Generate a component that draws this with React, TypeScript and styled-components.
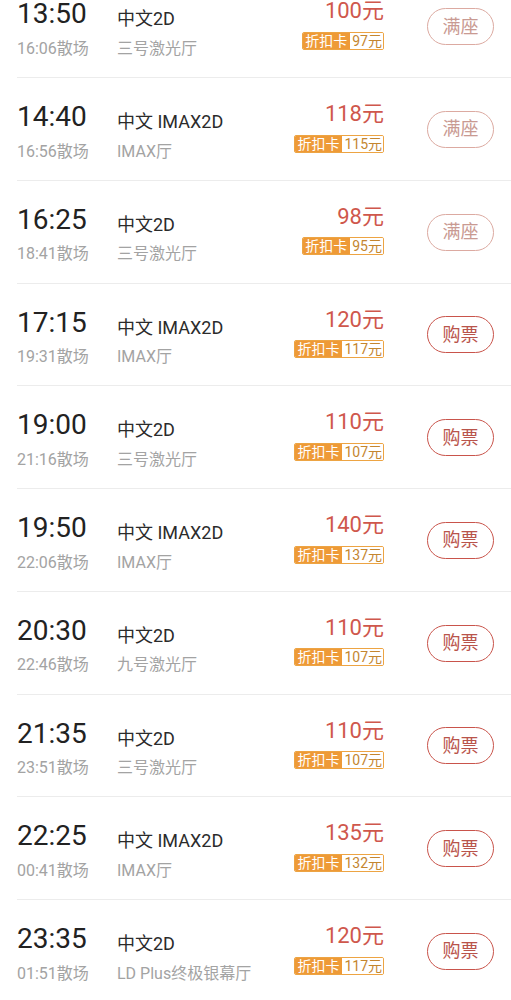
import React from 'react';
import styled, { createGlobalStyle } from 'styled-components';

const GlobalStyle = createGlobalStyle`
    html, body {
        margin: 0;
        padding: 0;
        background: #ffffff;
        overflow: hidden;
    }
    body {
        font-family: Roboto, 'Noto Sans CJK SC', sans-serif;
        -webkit-font-smoothing: antialiased;
    }
`;

const List = styled.div`
    margin-top: -24.75px;
    padding-left: 17px;
`;

const Row = styled.div`
    display: flex;
    align-items: flex-start;
    height: 102.75px;
    box-sizing: border-box;
    padding-right: 17px;
    border-bottom: 1px solid #ececec;
`;

const TimeCol = styled.div`
    width: 100px;
    flex-shrink: 0;
    padding-top: 22px;
`;

const Start = styled.div`
    font-size: 28px;
    line-height: 34px;
    color: #222222;
`;

const Sub = styled.div`
    font-size: 16px;
    line-height: 20px;
    color: #a3a3a3;
    white-space: nowrap;
`;

const EndTime = styled(Sub)`
    margin-top: 7.5px;
`;

const InfoCol = styled.div`
    flex: 1;
    padding-top: 32px;
    min-width: 0;
`;

const Format = styled.div`
    font-size: 18px;
    line-height: 24px;
    color: #2b2b2b;
    white-space: nowrap;
`;

const Hall = styled(Sub)`
    margin-top: 7.5px;
`;

const PriceCol = styled.div`
    display: flex;
    flex-direction: column;
    align-items: flex-end;
    padding-top: 22px;
    margin-right: 43px;
`;

const Price = styled.div`
    font-size: 22px;
    line-height: 28px;
    color: #cf574c;
`;

const Card = styled.div`
    display: flex;
    margin-top: 6.5px;
    height: 18px;
    box-sizing: border-box;
    border: 1px solid #eda443;
    border-radius: 2px;
    overflow: hidden;
    font-size: 14px;
    line-height: 16px;
`;

const CardLabel = styled.span`
    background: #ee9a37;
    color: #ffffff;
    padding: 0 3px 0 2px;
`;

const CardPrice = styled.span`
    background: #ffffff;
    color: #c4862f;
    padding: 0 1px 0 2px;
`;

const BuyButton = styled.button<{ $full?: boolean }>`
    align-self: center;
    width: 67px;
    height: 37px;
    margin-top: 1px;
    padding: 0;
    box-sizing: border-box;
    border-radius: 19px;
    background: #ffffff;
    border: 1.5px solid ${(p) => (p.$full ? '#dcaaa1' : '#c9544b')};
    color: ${(p) => (p.$full ? '#c99a92' : '#b9544b')};
    font-family: Roboto, 'Noto Sans CJK SC', sans-serif;
    font-size: 18px;
    line-height: 20px;
`;

type Show = {
    start: string;
    end: string;
    format: string;
    hall: string;
    price: number;
    card: number;
    full?: boolean;
};

const shows: Show[] = [
    { start: '13:50', end: '16:06', format: '中文2D', hall: '三号激光厅', price: 100, card: 97, full: true },
    { start: '14:40', end: '16:56', format: '中文 IMAX2D', hall: 'IMAX厅', price: 118, card: 115, full: true },
    { start: '16:25', end: '18:41', format: '中文2D', hall: '三号激光厅', price: 98, card: 95, full: true },
    { start: '17:15', end: '19:31', format: '中文 IMAX2D', hall: 'IMAX厅', price: 120, card: 117 },
    { start: '19:00', end: '21:16', format: '中文2D', hall: '三号激光厅', price: 110, card: 107 },
    { start: '19:50', end: '22:06', format: '中文 IMAX2D', hall: 'IMAX厅', price: 140, card: 137 },
    { start: '20:30', end: '22:46', format: '中文2D', hall: '九号激光厅', price: 110, card: 107 },
    { start: '21:35', end: '23:51', format: '中文2D', hall: '三号激光厅', price: 110, card: 107 },
    { start: '22:25', end: '00:41', format: '中文 IMAX2D', hall: 'IMAX厅', price: 135, card: 132 },
    { start: '23:35', end: '01:51', format: '中文2D', hall: 'LD Plus终极银幕厅', price: 120, card: 117 },
];

function App() {
    return (
        <>
            <GlobalStyle />
            <List>
                {shows.map((s) => (
                    <Row key={s.start}>
                        <TimeCol>
                            <Start>{s.start}</Start>
                            <EndTime>{s.end}散场</EndTime>
                        </TimeCol>
                        <InfoCol>
                            <Format>{s.format}</Format>
                            <Hall>{s.hall}</Hall>
                        </InfoCol>
                        <PriceCol>
                            <Price>{s.price}元</Price>
                            <Card>
                                <CardLabel>折扣卡</CardLabel>
                                <CardPrice>{s.card}元</CardPrice>
                            </Card>
                        </PriceCol>
                        <BuyButton $full={s.full}>{s.full ? '满座' : '购票'}</BuyButton>
                    </Row>
                ))}
            </List>
        </>
    );
}

export default App;
